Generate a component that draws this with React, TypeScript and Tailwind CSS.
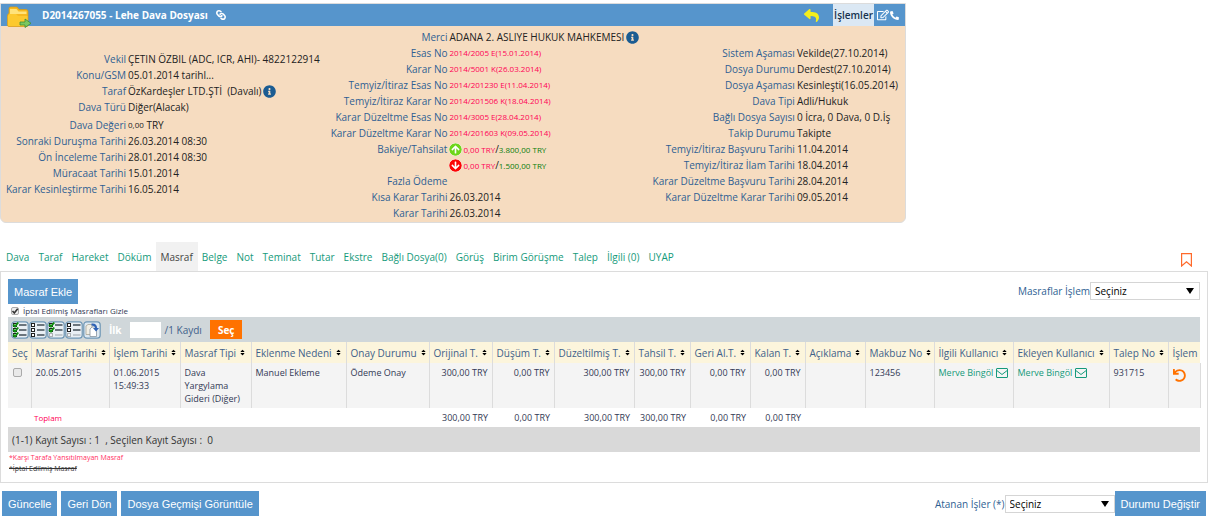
import React from "react";
import { FaArrowCircleDown, FaArrowCircleUp, FaInfoCircle, FaLink, FaPhoneAlt, FaRegEdit, FaReply, FaSort, FaUndo } from "react-icons/fa";

type Field = {
  label: string;
  value?: React.ReactNode;
};

const tabs = [
  "Dava",
  "Taraf",
  "Hareket",
  "Döküm",
  "Masraf",
  "Belge",
  "Not",
  "Teminat",
  "Tutar",
  "Ekstre",
  "Bağlı Dosya(0)",
  "Görüş",
  "Birim Görüşme",
  "Talep",
  "İlgili (0)",
  "UYAP",
];

const columns = [
  { title: "Seç", width: "w-[23px]", sortable: false },
  { title: "Masraf Tarihi", width: "w-[78px]", sortable: true },
  { title: "İşlem Tarihi", width: "w-[71px]", sortable: true },
  { title: "Masraf Tipi", width: "w-[71px]", sortable: true },
  { title: "Eklenme Nedeni", width: "w-[95px]", sortable: true },
  { title: "Onay Durumu", width: "w-[83px]", sortable: true },
  { title: "Orijinal T.", width: "w-[63px]", sortable: true },
  { title: "Düşüm T.", width: "w-[62px]", sortable: true },
  { title: "Düzeltilmiş T.", width: "w-[80px]", sortable: true },
  { title: "Tahsil T.", width: "w-[56px]", sortable: true },
  { title: "Geri Al.T.", width: "w-[60px]", sortable: true },
  { title: "Kalan T.", width: "w-[55px]", sortable: true },
  { title: "Açıklama", width: "w-[60px]", sortable: true },
  { title: "Makbuz No", width: "w-[69px]", sortable: true },
  { title: "İlgili Kullanıcı", width: "w-[79px]", sortable: true },
  { title: "Ekleyen Kullanıcı", width: "w-[96px]", sortable: true },
  { title: "Talep No", width: "w-[59px]", sortable: true },
  { title: "İşlem", width: "w-[32px]", sortable: false },
];

const amounts = ["300,00 TRY", "0,00 TRY", "300,00 TRY", "300,00 TRY", "0,00 TRY", "0,00 TRY"];

const Info = () => (
  <button aria-label="Bilgi" className="ml-[2px] text-[#1b5c92]">
    <FaInfoCircle size={13} />
  </button>
);

const Pink = ({ children }: { children: React.ReactNode }) => (
  <span className="text-[8px] leading-3 text-[#ff0055]">{children}</span>
);

const Balance = ({ paid, up }: { paid: string; up?: boolean }) => (
  <span className="flex items-center gap-px">
    {up ? (
      <FaArrowCircleUp size={13} className="rounded-full bg-white text-[#6fd51b]" />
    ) : (
      <FaArrowCircleDown size={13} className="rounded-full bg-white text-[#fb0505]" />
    )}
    <span>
      <Pink>0,00 TRY</Pink>/<span className="text-[8px] font-medium text-[#0a7d0a]">{paid}</span>
    </span>
  </span>
);

const caseFields: Field[] = [
  { label: "Vekil", value: "ÇETIN ÖZBIL (ADC, ICR, AHI)- 4822122914" },
  { label: "Konu/GSM", value: "05.01.2014 tarihl..." },
  { label: "Taraf", value: <>ÖzKardeşler LTD.ŞTİ &nbsp;(Davalı) <Info /></> },
  { label: "Dava Türü", value: "Diğer(Alacak)" },
];

const dateFields: Field[] = [
  { label: "Dava Değeri", value: <><span className="text-[8px]">0,00</span>&nbsp;TRY</> },
  { label: "Sonraki Duruşma Tarihi", value: "26.03.2014 08:30" },
  { label: "Ön İnceleme Tarihi", value: "28.01.2014 08:30" },
  { label: "Müracaat Tarihi", value: "15.01.2014" },
  { label: "Karar Kesinleştirme Tarihi", value: "16.05.2014" },
];

const courtFields: Field[] = [
  { label: "Merci", value: <>ADANA 2. ASLIYE HUKUK MAHKEMESI<Info /></> },
  { label: "Esas No", value: <Pink>2014/2005 E(15.01.2014)</Pink> },
  { label: "Karar No", value: <Pink>2014/5001 K(26.03.2014)</Pink> },
  { label: "Temyiz/İtiraz Esas No", value: <Pink>2014/201230 E(11.04.2014)</Pink> },
  { label: "Temyiz/İtiraz Karar No", value: <Pink>2014/201506 K(18.04.2014)</Pink> },
  { label: "Karar Düzeltme Esas No", value: <Pink>2014/3005 E(28.04.2014)</Pink> },
  { label: "Karar Düzeltme Karar No", value: <Pink>2014/201603 K(09.05.2014)</Pink> },
  { label: "Bakiye/Tahsilat", value: <Balance up paid="3.800,00 TRY" /> },
  { label: "", value: <Balance paid="1.500,00 TRY" /> },
  { label: "Fazla Ödeme" },
  { label: "Kısa Karar Tarihi", value: "26.03.2014" },
  { label: "Karar Tarihi", value: "26.03.2014" },
];

const statusFields: Field[] = [
  { label: "Sistem Aşaması", value: "Vekilde(27.10.2014)" },
  { label: "Dosya Durumu", value: "Derdest(27.10.2014)" },
  { label: "Dosya Aşaması", value: "Kesinleşti(16.05.2014)" },
  { label: "Dava Tipi", value: "Adli/Hukuk" },
  { label: "Bağlı Dosya Sayısı", value: "0 İcra, 0 Dava, 0 D.İş" },
  { label: "Takip Durumu", value: "Takipte" },
  { label: "Temyiz/İtiraz Başvuru Tarihi", value: "11.04.2014" },
  { label: "Temyiz/İtiraz İlam Tarihi", value: "18.04.2014" },
  { label: "Karar Düzeltme Başvuru Tarihi", value: "28.04.2014" },
  { label: "Karar Düzeltme Karar Tarihi", value: "09.05.2014" },
];

const FieldList = ({ fields, labelWidth }: { fields: Field[]; labelWidth: string }) => (
  <dl>
    {fields.map((field, i) => (
      <div key={i} className="flex h-4 items-center gap-[2px] whitespace-nowrap">
        <dt className={`shrink-0 text-right text-[#2f5f93] ${labelWidth}`}>{field.label}</dt>
        <dd className="flex items-center">{field.value}</dd>
      </div>
    ))}
  </dl>
);

const FolderIcon = () => (
  <svg width="25" height="24" viewBox="0 0 25 24" aria-hidden="true">
    <path d="M2 4.500 Q2 3 3.500 3 H10 L12 5.500 H19 Q21 5.500 21 7.500 V21 Q21 22.500 19.500 22.500 H2 Q.5 22.500 .5 21 V11 L2 9 Z" fill="#f5b921" stroke="#d99a12" strokeWidth=".7" />
    <path d="M3 5 H9.500 L11.500 7.500 H19.500 V10 H3 Z" fill="#ffe37a" />
    <path d="M.8 12 L2.500 10 H9 L11 12 H20.500 V21 Q20.500 22 19.500 22 H2 Q.8 22 .8 21 Z" fill="#fcc92f" />
    <path d="M13 18 H18 V15 L24 19.300 L18 23.500 V21 H13 Z" fill="#7cc75f" stroke="#3d8f35" strokeWidth=".8" />
  </svg>
);

const ListIcon = ({ checked, faded }: { checked: number; faded: boolean }) => (
  <svg width="18" height="18" viewBox="0 0 18 18" aria-hidden="true">
    <rect x=".8" y=".8" width="16.400" height="16.400" rx="3" fill="#e9eff4" stroke="#6f97b5" strokeWidth="1.200" />
    {[2.500, 7.500, 12.500].map((y, i) => (
      <g key={y} opacity={faded && i === 2 ? 0.3 : 1}>
        <rect x="2.500" y={y} width="3" height="3" fill="#fff" stroke="#222" strokeWidth="1" />
        <path d={`M8 ${y + 1.500} H15.500`} stroke="#4c5760" strokeWidth="1.600" />
        {i < checked && <path d={`M2.200 ${y + 1} L4 ${y + 3} L7.200 ${y - 1}`} fill="none" stroke="#0f8f0f" strokeWidth="2" />}
      </g>
    ))}
  </svg>
);

const CopyIcon = () => (
  <svg width="18" height="18" viewBox="0 0 18 18" aria-hidden="true">
    <rect x=".8" y=".8" width="16.400" height="16.400" rx="3" fill="#dce8f2" stroke="#6f97b5" strokeWidth="1.200" />
    <path d="M3 5 L5 3.500 H9 V13.500 H3 Z" fill="#f1efe6" stroke="#a9a594" strokeWidth=".8" />
    <path d="M7 8 L9 6 H13.500 V15.500 H7 Z" fill="#fff" stroke="#8793a0" strokeWidth=".8" />
    <path d="M8.500 2.500 Q14 2 14 7 H16 L13 10.500 L10 7 H12 Q12 4.500 8.500 4.500 Z" fill="#2f62b5" />
  </svg>
);

const MailIcon = () => (
  <svg width="12" height="10" viewBox="0 0 12 10" fill="none" stroke="#159a7b" aria-hidden="true">
    <rect x=".5" y=".5" width="11" height="9" rx=".5" />
    <path d="M.8 2.500 L6 6.500 L11.200 2.500" />
  </svg>
);

const BlueButton = ({ children }: { children: React.ReactNode }) => (
  <button className="h-[25px] bg-[#5695cc] px-[6px] font-['Liberation_Sans',sans-serif] text-[11px] whitespace-nowrap text-white">
    {children}
  </button>
);

const Picker = ({ id, label }: { id: string; label: string }) => (
  <div className="flex items-center">
    <label htmlFor={id} className="text-[#2f5f93]">{label}</label>
    <div className="relative">
      <select id={id} className="h-[18px] w-[110px] appearance-none border border-[#d5d5d5] bg-white px-1 text-black">
        <option>Seçiniz</option>
      </select>
      <svg width="8" height="6" viewBox="0 0 8 6" className="pointer-events-none absolute top-[6px] right-[6px]" aria-hidden="true">
        <path d="M0 0 H8 L4 6 Z" fill="#000" />
      </svg>
    </div>
  </div>
);

const CasePanel = () => (
  <section className="w-3/4 overflow-hidden rounded-b-md border border-[#dcdcdc] bg-[#f6dcc0]">
    <header className="flex h-[22px] items-center bg-[#5695cc] text-white">
      <div className="h-[22px] w-[41px] pl-[6px]">
        <FolderIcon />
      </div>
      <h1 className="font-bold">D2014267055 - Lehe Dava Dosyası</h1>
      <button aria-label="Bağlantı" className="ml-2">
        <FaLink size={10} className="rotate-90" />
      </button>
      <div className="ml-auto flex h-full items-center pr-[6px]">
        <button aria-label="Geri" className="mr-[14px] text-[#f4ee1c]">
          <FaReply size={15} />
        </button>
        <button className="h-full bg-[#dbe8f4] px-px font-semibold text-[#16334f]">İşlemler</button>
        <button aria-label="Düzenle" className="ml-[3px]">
          <FaRegEdit size={12} />
        </button>
        <button aria-label="Telefon" className="ml-px">
          <FaPhoneAlt size={9} />
        </button>
      </div>
    </header>
    <div className="grid grid-cols-[36%_36%_28%] pt-px text-[#222]">
      <div className="flex flex-col gap-[2px] pt-6">
        <FieldList fields={caseFields} labelWidth="w-[125px]" />
        <FieldList fields={dateFields} labelWidth="w-[125px]" />
      </div>
      <div className="pt-[2px] pb-px">
        <FieldList fields={courtFields} labelWidth="w-[121px]" />
      </div>
      <div className="pt-[18px]">
        <FieldList fields={statusFields} labelWidth="w-[143px]" />
      </div>
    </div>
  </section>
);

const ExpenseTable = () => (
  <table className="w-full table-fixed border-collapse text-left text-[#333a55]">
    <thead>
      <tr className="h-[21px] bg-[#fcf5dc]">
        {columns.map((column) => (
          <th key={column.title} className={`border-l border-[#dcdcdc] pl-1 font-normal whitespace-nowrap text-[#41618a] first:border-l-0 ${column.width}`}>
            <span className="flex items-center gap-[3px]">
              {column.title}
              {column.sortable && <FaSort size={7} className="shrink-0 text-black" />}
            </span>
          </th>
        ))}
      </tr>
    </thead>
    <tbody>
      <tr className="h-[45px] bg-[#f4f4f4] align-top text-[9px] leading-[13px] *:border-l *:border-[#dcdcdc] *:pt-[3px] *:pl-1 *:first:border-l-0">
        <td>
          <input type="checkbox" aria-label="Kaydı seç" className="mt-[2px] ml-px size-[9px] appearance-none rounded-xs border border-[#aaa] bg-[#e9e9e9]" />
        </td>
        <td>20.05.2015</td>
        <td>01.06.2015 15:49:33</td>
        <td>Dava Yargylama Gideri (Diğer)</td>
        <td>Manuel Ekleme</td>
        <td>Ödeme Onay</td>
        {amounts.map((amount, i) => (
          <td key={i} className="pr-1 text-right whitespace-nowrap">{amount}</td>
        ))}
        <td />
        <td>123456</td>
        {[0, 1].map((i) => (
          <td key={i} className="whitespace-nowrap">
            <a href="#" className="flex items-center gap-[3px] text-[#159a7b]">
              Merve Bingöl <MailIcon />
            </a>
          </td>
        ))}
        <td>931715</td>
        <td className="border-r">
          <button aria-label="Geri al" className="mt-[3px] text-[#ff7200]">
            <FaUndo size={13} />
          </button>
        </td>
      </tr>
      <tr className="h-[19px] text-[9px]">
        <td />
        <td colSpan={5} className="pl-[3px] text-[8px] text-[#ff0055]">Toplam</td>
        {amounts.map((amount, i) => (
          <td key={i} className="pr-1 text-right whitespace-nowrap">{amount}</td>
        ))}
        <td colSpan={6} />
      </tr>
    </tbody>
  </table>
);

const App = () => {
  return (
    <main className="pt-[3px] pr-1 font-['Open_Sans','Noto_Sans',sans-serif] text-[10px] leading-4">
      <CasePanel />

      <nav className="mt-[19px] flex items-end pl-[2px]">
        {tabs.map((tab) => (
          <a
            key={tab}
            href="#"
            className={`flex h-[29px] items-center pr-[5px] pl-1 whitespace-nowrap ${tab === "Masraf" ? "bg-[#f1f1f1] text-[#444]" : "text-[#159a7b]"}`}
          >
            {tab}
          </a>
        ))}
        <button aria-label="Yer imi" className="mr-4 mb-1 ml-auto">
          <svg width="11" height="14" viewBox="0 0 11 14" fill="none" stroke="#ff6a2b" strokeWidth="1.200">
            <path d="M.6 .6 H10.400 V13 L5.500 8.800 L.6 13 Z" />
          </svg>
        </button>
      </nav>

      <section className="border border-[#dcdcdc] px-[7px] pt-[7px] pb-2">
        <div className="flex items-start justify-between">
          <BlueButton>Masraf Ekle</BlueButton>
          <div className="pt-[3px]">
            <Picker id="expense-action" label="Masraflar İşlem" />
          </div>
        </div>
        <div className="flex h-[13px] items-center gap-1 pl-[3px] text-[8px] text-[#333a55]">
          <span className="relative flex">
            <input id="hide-cancelled" type="checkbox" defaultChecked className="peer size-2 appearance-none rounded-xs border border-[#aaa] bg-[#eee]" />
            <svg viewBox="0 0 8 8" className="pointer-events-none absolute inset-0 hidden size-2 peer-checked:block" fill="none" stroke="#333" strokeWidth="1.600" aria-hidden="true">
              <path d="M1.500 4 L3.300 6 L6.700 1.800" />
            </svg>
          </span>
          <label htmlFor="hide-cancelled">İptal Edilmiş Masrafları Gizle</label>
        </div>
        <div className="flex h-[25px] items-center bg-[#d0d7da] pl-[3px] text-[#41618a]">
          <button aria-label="Tümünü seç"><ListIcon checked={3} faded={false} /></button>
          <button aria-label="Tümünü bırak"><ListIcon checked={0} faded={false} /></button>
          <button aria-label="Sayfayı seç"><ListIcon checked={2} faded /></button>
          <button aria-label="Sayfayı bırak"><ListIcon checked={0} faded /></button>
          <button aria-label="Kopyala"><CopyIcon /></button>
          <label htmlFor="first" className="ml-2 font-bold text-white">İlk</label>
          <input id="first" className="mr-1 ml-2 h-4 w-[31px] bg-white" />
          /1 Kaydı
          <button className="ml-2 h-[19px] bg-[#ff7200] px-2 font-bold text-white">Seç</button>
        </div>
        <ExpenseTable />
        <div className="flex h-[25px] items-center bg-[#d9d9d9] pl-1 text-[#333]">
          (1-1) Kayıt Sayısı : 1 &nbsp;, Seçilen Kayıt Sayısı : &nbsp;0
        </div>
        <div className="pl-px text-[7px] leading-[11px]">
          <p className="text-[#ff2f5f]">*Karşı Tarafa Yansıtılmayan Masraf</p>
          <p className="text-[#333] line-through">*İptal Edilmiş Masraf</p>
        </div>
      </section>

      <footer className="flex items-center justify-between pt-2 pr-[2px] pl-[2px]">
        <div className="flex gap-1">
          <BlueButton>Güncelle</BlueButton>
          <BlueButton>Geri Dön</BlueButton>
          <BlueButton>Dosya Geçmişi Görüntüle</BlueButton>
        </div>
        <div className="flex items-center">
          <Picker id="assigned-jobs" label="Atanan İşler (*)" />
          <BlueButton>Durumu Değiştir</BlueButton>
        </div>
      </footer>
    </main>
  );
};

export default App;
